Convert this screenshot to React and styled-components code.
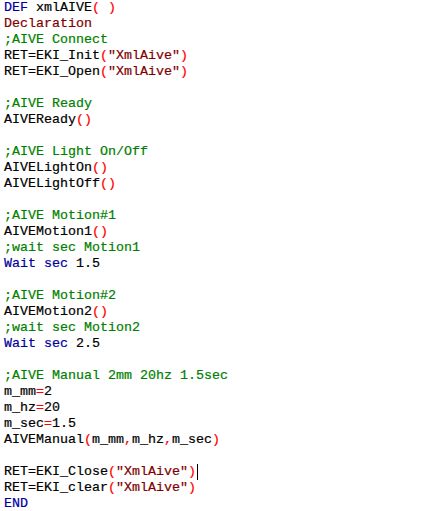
import React from 'react';
import styled, { createGlobalStyle } from 'styled-components';

const GlobalStyle = createGlobalStyle`
  html, body {
    margin: 0;
    padding: 0;
    background: #ffffff;
  }
`;

const Editor = styled.div`
  width: 443px;
  height: 511px;
  box-sizing: border-box;
  padding: 0 0 0 4px;
  background: #ffffff;
  font-family: "Liberation Mono", "Courier New", monospace;
  font-size: 13.33px;
  line-height: 16px;
  color: #000000;
  -webkit-text-stroke: 0.2px;
  overflow: hidden;
`;

const Line = styled.div`
  height: 16px;
  white-space: pre;
  position: relative;
`;

const Keyword = styled.span`
  color: #0000a0;
`;

const Paren = styled.span`
  color: #ff0000;
`;

const Str = styled.span`
  color: #800000;
`;

const Comment = styled.span`
  color: #008000;
`;

const Op = styled.span`
  color: ${({ red }) => (red ? '#ff0000' : '#000000')};
`;

const Caret = styled.span`
  display: inline-block;
  width: 1px;
  height: 16px;
  background: #000000;
  vertical-align: top;
  margin-left: 1px;
`;

const Call = ({ name, args }) => (
  <>
    {name}
    <Paren>(</Paren>
    {args}
    <Paren>)</Paren>
  </>
);

const EkiCall = ({ fn, caret }) => (
  <Line>
    RET=EKI_{fn}
    <Paren>(</Paren>
    <Str>"XmlAive"</Str>
    <Paren>)</Paren>
    {caret && <Caret />}
  </Line>
);

const Assign = ({ name, value }) => (
  <Line>
    {name}
    <Op red>=</Op>
    {value}
  </Line>
);

const Blank = () => <Line> </Line>;

export default function App() {
  return (
    <>
      <GlobalStyle />
      <Editor>
        <Line>
          <Keyword>DEF</Keyword> xmlAIVE<Paren>( )</Paren>
        </Line>
        <Line>
          <Str>Declaration</Str>
        </Line>
        <Line><Comment>;AIVE Connect</Comment></Line>
        <EkiCall fn="Init" />
        <EkiCall fn="Open" />
        <Blank />
        <Line><Comment>;AIVE Ready</Comment></Line>
        <Line><Call name="AIVEReady" /></Line>
        <Blank />
        <Line><Comment>;AIVE Light On/Off</Comment></Line>
        <Line><Call name="AIVELightOn" /></Line>
        <Line><Call name="AIVELightOff" /></Line>
        <Blank />
        <Line><Comment>;AIVE Motion#1</Comment></Line>
        <Line><Call name="AIVEMotion1" /></Line>
        <Line><Comment>;wait sec Motion1</Comment></Line>
        <Line><Keyword>Wait sec</Keyword> 1.5</Line>
        <Blank />
        <Line><Comment>;AIVE Motion#2</Comment></Line>
        <Line><Call name="AIVEMotion2" /></Line>
        <Line><Comment>;wait sec Motion2</Comment></Line>
        <Line><Keyword>Wait sec</Keyword> 2.5</Line>
        <Blank />
        <Line><Comment>;AIVE Manual 2mm 20hz 1.5sec</Comment></Line>
        <Assign name="m_mm" value="2" />
        <Assign name="m_hz" value="20" />
        <Assign name="m_sec" value="1.5" />
        <Line>
          <Call
            name="AIVEManual"
            args={<>m_mm<Op red>,</Op>m_hz<Op red>,</Op>m_sec</>}
          />
        </Line>
        <Blank />
        <EkiCall fn="Close" caret />
        <EkiCall fn="clear" />
        <Line><Keyword>END</Keyword></Line>
      </Editor>
    </>
  );
}
